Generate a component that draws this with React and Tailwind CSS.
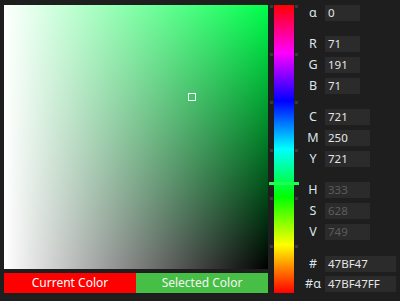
import React from "react";

const ticks = [0, 48, 96, 144, 192, 240];

const Field = ({ label, value, width = "w-[35px]", muted = false, className = "" }) => (
  <div className={`flex items-center h-[16px] ${className}`}>
    <span className="w-[18px] text-center text-[#dde4ec] text-[12.5px] leading-none">{label}</span>
    <div
      className={`ml-[3px] h-[16px] ${width} bg-[#2b2b2b] pl-[3px] flex items-center text-[11.5px] leading-none ${
        muted ? "text-[#5c5c5c]" : "text-[#e6e6e6]"
      }`}
    >
      {value}
    </div>
  </div>
);

export default function App() {
  return (
    <div
      className="w-[400px] h-[301px] bg-[#1e1e1e] flex overflow-hidden"
      style={{ fontFamily: '"Noto Sans", "Open Sans", sans-serif' }}
    >
      {/* Saturation / value square + swatches */}
      <div className="pl-[4px] pt-[5px] flex flex-col">
        <div className="relative w-[264px] h-[264px] bg-[linear-gradient(to_right,#ffffff,rgba(255,255,255,0)),linear-gradient(to_bottom,#00ff4c,#000000)]">
          <div className="absolute left-[184px] top-[88px] w-[8px] h-[8px] border border-white" />
        </div>
        <div className="mt-[4px] flex h-[20px] text-[12px] leading-none">
          <div className="w-[132px] bg-[#ff0000] text-white flex items-center justify-center">
            Current Color
          </div>
          <div className="w-[132px] bg-[#47bf47] text-[#f4f4f4] flex items-center justify-center">
            Selected Color
          </div>
        </div>
      </div>

      {/* Hue slider */}
      <div className="relative ml-[6px] mt-[5px] w-[20px] h-[288px] bg-[linear-gradient(to_bottom,#ff0000,#ff00ff,#0000ff,#00ffff,#00ff00,#ffff00,#ff0000)]">
        {ticks.map((t) => (
          <React.Fragment key={t}>
            <div className="absolute left-[-4px] w-[3px] h-[3px] bg-[#3a3a3a]" style={{ top: t }} />
            <div className="absolute right-[-4px] w-[3px] h-[3px] bg-[#3a3a3a]" style={{ top: t }} />
          </React.Fragment>
        ))}
        <div className="absolute left-[-5px] top-[177px] w-[30px] h-[3px] bg-[#1eff50]" />
      </div>

      {/* Value fields */}
      <div className="ml-[10px] pt-[5px] flex flex-col">
        <Field label="α" value="0" />
        <Field label="R" value="71" className="mt-[15px]" />
        <Field label="G" value="191" className="mt-[5px]" />
        <Field label="B" value="71" className="mt-[5px]" />
        <Field label="C" value="721" width="w-[45px]" className="mt-[15px]" />
        <Field label="M" value="250" width="w-[45px]" className="mt-[5px]" />
        <Field label="Y" value="721" width="w-[45px]" className="mt-[5px]" />
        <Field label="H" value="333" width="w-[45px]" muted className="mt-[15px]" />
        <Field label="S" value="628" width="w-[45px]" muted className="mt-[5px]" />
        <Field label="V" value="749" width="w-[45px]" muted className="mt-[5px]" />
        <Field label="#" value="47BF47" width="w-[71px]" className="mt-[16px]" />
        <Field label="#α" value="47BF47FF" width="w-[71px]" className="mt-[4px]" />
      </div>
    </div>
  );
}
